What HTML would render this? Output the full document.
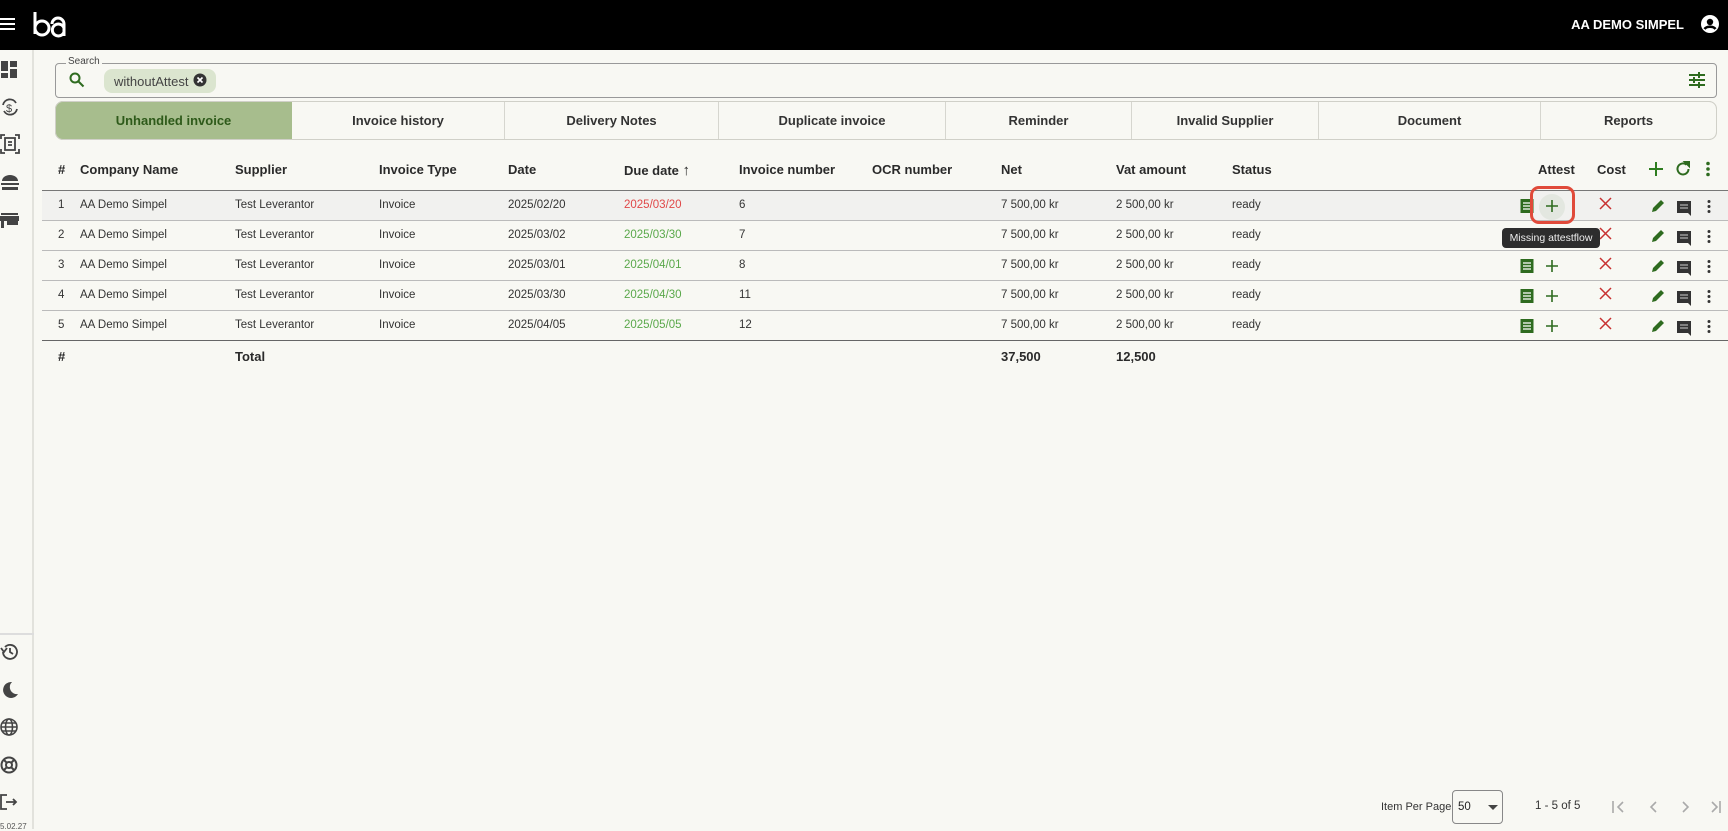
<!DOCTYPE html>
<html><head><meta charset="utf-8"><style>
*{box-sizing:border-box;margin:0;padding:0}
body{width:1728px;height:829px;overflow:hidden;background:#f8f8f3;font-family:"Liberation Sans",sans-serif;color:#222;position:relative}
.abs{position:absolute}
.top{left:0;top:0;width:1728px;height:50px;background:#000}
.side{left:0;top:50px;width:34px;height:779px;background:#f8f8f3;border-right:2px solid #e2e2dc}
.t{position:absolute;white-space:nowrap}
.h{font-size:13px;font-weight:bold;color:#2a2a2a;top:162px}
.c{font-size:11.5px;color:#333}
.line{position:absolute;left:42px;width:1686px;height:1px;background:#bbb}
.tab{position:absolute;top:101px;height:39px;border:1px solid #d6d6cf;border-left:none;font-size:13px;font-weight:bold;color:#333;display:flex;align-items:center;justify-content:center;background:#f8f8f3}
</style></head><body>
<div class="abs top"></div>
<svg class="abs" style="left:0;top:16px" width="16" height="16" viewBox="0 0 16 16"><path d="M0 3h15M0 8h15M0 13h15" stroke="#fff" stroke-width="2"/></svg>
<svg class="abs" style="left:32px;top:10px" width="36" height="30" viewBox="0 0 36 30"><path d="M3 2v22M3 18a7 7 0 1 0 14 0a7 7 0 1 0-14 0M20 14a6 6 0 0 1 12 0v12M32 18a6 6 0 1 0 0 4" fill="none" stroke="#fff" stroke-width="3"/></svg>
<div class="t" style="right:44px;top:17px;color:#fff;font-size:13px;font-weight:bold">AA DEMO SIMPEL</div>
<svg class="abs" style="left:1700px;top:14px" width="20" height="20" viewBox="0 0 20 20"><circle cx="10" cy="10" r="9" fill="#fff"/><circle cx="10" cy="8" r="3.2" fill="#000"/><path d="M4.5 15c2-3 9-3 11 0" stroke="#000" stroke-width="2.5" fill="none"/></svg>
<div class="abs side"></div>
<div class="abs" style="left:0;top:633px;width:34px;height:2px;background:#ddd"></div>
<svg class="abs" style="left:0;top:60px" width="20" height="20" viewBox="0 0 20 20" fill="#444"><rect x="1" y="1" width="7" height="10"/><rect x="10" y="1" width="7" height="6"/><rect x="10" y="9" width="7" height="9"/><rect x="1" y="13" width="7" height="5"/></svg>
<svg class="abs" style="left:0;top:97px" width="20" height="20" viewBox="0 0 20 20" fill="none" stroke="#444" stroke-width="1.8"><path d="M3 8a7 7 0 0 1 13-2M17 12a7 7 0 0 1-13 2"/><text x="6" y="15" font-size="11" fill="#444" stroke="none" font-family="Liberation Sans">$</text></svg>
<svg class="abs" style="left:0;top:134px" width="20" height="20" viewBox="0 0 20 20" fill="none" stroke="#444" stroke-width="1.8"><path d="M1 5V1h4M15 1h4v4M19 15v4h-4M5 19H1v-4"/><rect x="5" y="4" width="10" height="12"/><path d="M8 8h4M8 11h4"/></svg>
<svg class="abs" style="left:0;top:173px" width="20" height="20" viewBox="0 0 20 20" fill="#444"><path d="M2 8a8 6 0 0 1 16 0z"/><rect x="1" y="10" width="18" height="2"/><rect x="2" y="14" width="16" height="3"/></svg>
<svg class="abs" style="left:0;top:211px" width="20" height="20" viewBox="0 0 20 20" fill="#444"><rect x="1" y="2" width="17" height="2"/><rect x="0" y="5" width="19" height="5"/><rect x="1" y="10" width="3" height="7"/><rect x="7" y="10" width="11" height="4"/></svg>
<svg class="abs" style="left:0;top:642px" width="20" height="20" viewBox="0 0 20 20" fill="none" stroke="#444" stroke-width="1.8"><path d="M3 10a7 7 0 1 0 2-5M1 6l3 4 3-4M10 6v4l3 2"/></svg>
<svg class="abs" style="left:0;top:680px" width="20" height="20" viewBox="0 0 20 20"><path d="M12 2a8 8 0 1 0 6 12a7 7 0 0 1-6-12z" fill="#444"/></svg>
<svg class="abs" style="left:0;top:717px" width="20" height="20" viewBox="0 0 20 20" fill="none" stroke="#444" stroke-width="1.6"><circle cx="9" cy="10" r="8"/><ellipse cx="9" cy="10" rx="3.5" ry="8"/><path d="M1 10h16M2 6h14M2 14h14"/></svg>
<svg class="abs" style="left:0;top:755px" width="20" height="20" viewBox="0 0 20 20" fill="none" stroke="#444" stroke-width="2"><circle cx="9" cy="10" r="7.5"/><circle cx="9" cy="10" r="3"/><path d="M4 5l3 3M14 5l-3 3M4 15l3-3M14 15l-3-3"/></svg>
<svg class="abs" style="left:0;top:792px" width="20" height="20" viewBox="0 0 20 20" fill="none" stroke="#444" stroke-width="1.8"><path d="M7 3H1v14h6M6 10h10M13 7l3 3-3 3"/></svg>
<div class="t" style="left:0;top:822px;font-size:8px;color:#555">5.02.27</div>
<div class="abs" style="left:55px;top:63px;width:1662px;height:35px;border:1px solid #999;border-radius:4px"></div>
<div class="t" style="left:66px;top:56px;font-size:10px;color:#444;background:#f8f8f3;padding:0 2px">Search</div>
<svg class="abs" style="left:69px;top:72px" width="16" height="16" viewBox="0 0 16 16" fill="none" stroke="#2e6b1f" stroke-width="2"><circle cx="6" cy="6" r="4.5"/><path d="M9.5 9.5l5 5"/></svg>
<div class="abs" style="left:104px;top:69px;width:112px;height:24px;background:#dbe5cf;border-radius:8px"></div>
<div class="t" style="left:114px;top:74px;font-size:13px;color:#444">withoutAttest</div>
<svg class="abs" style="left:193px;top:73px" width="14" height="14" viewBox="0 0 14 14"><circle cx="7" cy="7" r="6.5" fill="#333"/><path d="M4.5 4.5l5 5M9.5 4.5l-5 5" stroke="#fff" stroke-width="1.6"/></svg>
<svg class="abs" style="left:1688px;top:72px" width="18" height="16" viewBox="0 0 18 16" stroke="#2e6b1f" stroke-width="2"><path d="M1 3h16M1 8h16M1 13h16"/><path d="M11 0v6M6 5v6M11 10v6" /></svg>
<div class="tab" style="left:55px;width:237px;background:#a7bd8d;color:#2e5a1a;border:1px solid #a7bd8d;border-radius:8px 0 0 8px">Unhandled invoice</div>
<div class="tab" style="left:292px;width:213px">Invoice history</div>
<div class="tab" style="left:505px;width:214px">Delivery Notes</div>
<div class="tab" style="left:719px;width:227px">Duplicate invoice</div>
<div class="tab" style="left:946px;width:186px">Reminder</div>
<div class="tab" style="left:1132px;width:187px">Invalid Supplier</div>
<div class="tab" style="left:1319px;width:222px">Document</div>
<div class="tab" style="left:1541px;width:176px;border-radius:0 8px 8px 0">Reports</div>
<div class="abs" style="left:55px;top:101px;width:1662px;height:39px;border:1px solid #d0d0c8;border-radius:8px;pointer-events:none"></div>
<div class="t h" style="left:58px">#</div>
<div class="t h" style="left:80px">Company Name</div>
<div class="t h" style="left:235px">Supplier</div>
<div class="t h" style="left:379px">Invoice Type</div>
<div class="t h" style="left:508px">Date</div>
<div class="t h" style="left:624px">Due date <span style="font-size:15px">↑</span></div>
<div class="t h" style="left:739px">Invoice number</div>
<div class="t h" style="left:872px">OCR number</div>
<div class="t h" style="left:1001px">Net</div>
<div class="t h" style="left:1116px">Vat amount</div>
<div class="t h" style="left:1232px">Status</div>
<div class="t h" style="left:1538px">Attest</div>
<div class="t h" style="left:1597px">Cost</div>
<svg class="abs" style="left:1648px;top:161px" width="16" height="16" viewBox="0 0 16 16" stroke="#2e7d1f" stroke-width="2"><path d="M8 1v14M1 8h14"/></svg>
<svg class="abs" style="left:1675px;top:161px" width="16" height="16" viewBox="0 0 16 16" fill="none" stroke="#2e6b1f" stroke-width="2"><path d="M13.5 8a5.5 5.5 0 1 1-2-4.3"/><path d="M10 1h4v4z" fill="#2e6b1f"/></svg>
<svg class="abs" style="left:1704px;top:161px" width="8" height="16" viewBox="0 0 8 16" fill="#2e6b1f"><circle cx="4" cy="2.5" r="1.8"/><circle cx="4" cy="8" r="1.8"/><circle cx="4" cy="13.5" r="1.8"/></svg>
<div class="abs" style="left:42px;top:190px;width:1686px;height:30px;background:#f1f1ef"></div>
<div class="line" style="top:190px;background:#777"></div>
<div class="line" style="top:220px"></div><div class="line" style="top:250px"></div><div class="line" style="top:280px"></div><div class="line" style="top:310px"></div>
<div class="line" style="top:340px;background:#666"></div>
<div id="rows"></div>
<script>
var d=[["1","2025/02/20","2025/03/20","6","#e04848"],["2","2025/03/02","2025/03/30","7","#5aa84a"],["3","2025/03/01","2025/04/01","8","#5aa84a"],["4","2025/03/30","2025/04/30","11","#5aa84a"],["5","2025/04/05","2025/05/05","12","#5aa84a"]];
var h="";
d.forEach(function(r,i){var y=199+i*30;
function t(x,s,c){h+='<div class="t c" style="left:'+x+'px;top:'+y+'px;'+(c?'color:'+c:'')+'">'+s+'</div>';}
t(58,r[0]);t(80,"AA Demo Simpel");t(235,"Test Leverantor");t(379,"Invoice");t(508,r[1]);t(624,r[2],r[4]);t(739,r[3]);t(1001,"7 500,00 kr");t(1116,"2 500,00 kr");t(1232,"ready");
var iy=y-1;
if(i!=1)h+='<svg class="abs" style="left:1520px;top:'+iy+'px" width="14" height="16" viewBox="0 0 14 16"><rect x="0.5" y="1" width="13" height="14" fill="#2e6b1f"/><path d="M3 5h8M3 8h8M3 11h8" stroke="#fff" stroke-width="1.3"/></svg>';
if(i==0)h+='<div class="abs" style="left:1539px;top:'+(y-5)+'px;width:26px;height:26px;border-radius:13px;background:#e3e7e0"></div>';
if(i!=1)h+='<svg class="abs" style="left:1545px;top:'+(iy+1)+'px" width="14" height="14" viewBox="0 0 14 14" stroke="#2e6b1f" stroke-width="1.6"><path d="M7 1v12M1 7h12"/></svg>';
h+='<svg class="abs" style="left:1599px;top:'+(iy-1)+'px" width="13" height="13" viewBox="0 0 13 13" stroke="#c83030" stroke-width="1.5"><path d="M1 1l11 11M12 1L1 12"/></svg>';
h+='<svg class="abs" style="left:1651px;top:'+(iy)+'px" width="15" height="15" viewBox="0 0 15 15"><path d="M1 14l1-4 8-8 3 3-8 8z" fill="#2e6b1f"/></svg>';
h+='<svg class="abs" style="left:1677px;top:'+(iy+2)+'px" width="15" height="16" viewBox="0 0 15 16"><path d="M0 1h14v15l-3-3H0z" fill="#333"/><path d="M3 5h8M3 8h8" stroke="#ccc" stroke-width="1"/></svg>';
h+='<svg class="abs" style="left:1705px;top:'+(iy+1)+'px" width="8" height="15" viewBox="0 0 8 15" fill="#333"><circle cx="4" cy="2.5" r="1.5"/><circle cx="4" cy="7.5" r="1.5"/><circle cx="4" cy="12.5" r="1.5"/></svg>';
});
document.getElementById("rows").innerHTML=h;
</script>
<div class="abs" style="left:1530px;top:186px;width:45px;height:38px;border:3px solid #e04a3a;border-radius:9px"></div>
<div class="abs" style="left:1502px;top:228px;width:98px;height:20px;background:#2d2d2d;border-radius:4px;color:#eee;font-size:10.5px;line-height:20px;text-align:center">Missing attestflow</div>
<div class="t h" style="left:58px;top:349px">#</div>
<div class="t h" style="left:235px;top:349px">Total</div>
<div class="t h" style="left:1001px;top:349px">37,500</div>
<div class="t h" style="left:1116px;top:349px">12,500</div>
<div class="t" style="left:1381px;top:801px;font-size:11px;color:#333">Item Per Page</div>
<div class="abs" style="left:1452px;top:790px;width:51px;height:34px;border:1px solid #888;border-radius:4px"></div>
<div class="t" style="left:1458px;top:801px;font-size:11.5px;color:#222">50</div>
<svg class="abs" style="left:1488px;top:805px" width="10" height="6" viewBox="0 0 10 6"><path d="M0 0h10L5 5z" fill="#444"/></svg>
<div class="t" style="left:1535px;top:800px;font-size:11.5px;color:#333">1 - 5 of 5</div>
<svg class="abs" style="left:1611px;top:800px" width="110" height="14" viewBox="0 0 110 14" fill="none" stroke="#aaa" stroke-width="1.6"><path d="M2 1v12M12 2L7 7l5 5M45 2l-5 5 5 5M72 2l5 5-5 5M101 2l5 5-5 5M109 1v12"/></svg>
</body></html>
